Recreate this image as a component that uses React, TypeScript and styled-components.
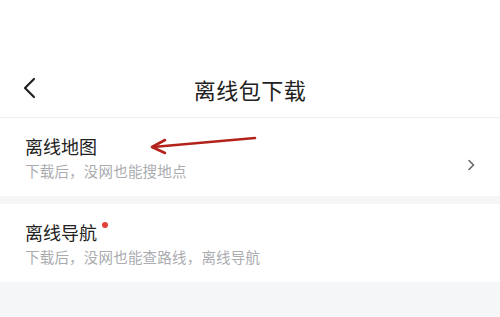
import React from 'react'
import styled, { createGlobalStyle } from 'styled-components'

const Global = createGlobalStyle`
  html, body { margin: 0; padding: 0; }
  body {
    background: #f5f6f8;
    font-family: "Noto Sans CJK SC", "Noto Sans", sans-serif;
  }
`

const Page = styled.div`
  position: relative;
  width: 500px;
  height: 317px;
  background: #f5f6f8;
  overflow: hidden;
`

const Top = styled.div`
  height: 60px;
  background: #fff;
`

const Header = styled.div`
  position: relative;
  height: 57px;
  background: #fff;
  border-bottom: 1px solid #eef0f3;
  display: flex;
  align-items: center;
  justify-content: center;
`

const Back = styled.div`
  position: absolute;
  left: 22px;
  top: 17px;
  width: 16px;
  height: 22px;
`

const Title = styled.div`
  font-size: 22px;
  color: #222;
  letter-spacing: 0.5px;
`

const Row = styled.div<{ $gap?: boolean }>`
  position: relative;
  background: #fff;
  height: 78px;
  padding: 15px 25px 0;
  box-sizing: border-box;
  margin-top: ${p => (p.$gap ? '8px' : '0')};
`

const RowTitle = styled.div`
  display: flex;
  align-items: flex-start;
  font-size: 18px;
  line-height: 26px;
  color: #222;
`

const Dot = styled.span`
  width: 6px;
  height: 6px;
  border-radius: 50%;
  background: #e2403a;
  margin-left: 5px;
  margin-top: 3px;
`

const RowSub = styled.div`
  font-size: 14.5px;
  line-height: 20px;
  color: #aaacb0;
  margin-top: 2px;
  letter-spacing: 0.2px;
`

const Chevron = styled.div`
  position: absolute;
  right: 25px;
  top: 34px;
  width: 8px;
  height: 12px;
`

const Arrow = styled.svg`
  position: absolute;
  left: 145px;
  top: 132px;
`

const App = () => {
  return (
    <Page>
      <Global />
      <Top />
      <Header>
        <Back>
          <svg width="16" height="22" viewBox="0 0 16 22">
            <path d="M12 2 L3 11 L12 20" fill="none" stroke="#222" strokeWidth="2.2" strokeLinecap="round" strokeLinejoin="round" />
          </svg>
        </Back>
        <Title>离线包下载</Title>
      </Header>
      <Row>
        <RowTitle>离线地图</RowTitle>
        <RowSub>下载后，没网也能搜地点</RowSub>
        <Chevron>
          <svg width="8" height="12" viewBox="0 0 8 12">
            <path d="M2 1.5 L6.5 6 L2 10.5" fill="none" stroke="#666" strokeWidth="1.6" strokeLinecap="round" strokeLinejoin="round" />
          </svg>
        </Chevron>
      </Row>
      <Row $gap>
        <RowTitle>
          离线导航
          <Dot />
        </RowTitle>
        <RowSub>下载后，没网也能查路线，离线导航</RowSub>
      </Row>
      <Arrow width="120" height="28" viewBox="0 0 120 28">
        <path d="M110 6 L8 15" fill="none" stroke="#b3231c" strokeWidth="2.6" strokeLinecap="round" />
        <path d="M20 8 L7 15 L20 21" fill="none" stroke="#b3231c" strokeWidth="2.6" strokeLinecap="round" strokeLinejoin="round" />
      </Arrow>
    </Page>
  )
}

export default App
